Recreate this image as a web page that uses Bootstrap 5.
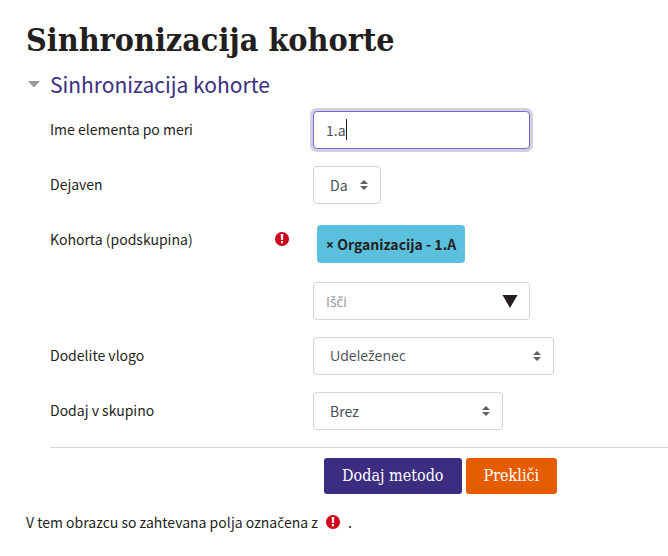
<!DOCTYPE html>
<html lang="sl">
<head>
<meta charset="utf-8">
<meta name="viewport" content="width=device-width, initial-scale=1">
<title>Sinhronizacija kohorte</title>
<link href="https://cdn.jsdelivr.net/npm/bootstrap@5.3.0/dist/css/bootstrap.min.css" rel="stylesheet">
<style>
  body, .form-control, .form-select { font-family: "Noto Sans CJK SC", "Noto Sans", sans-serif; font-size: 14px; line-height: 24px; }
  body { color: #231f20; background: #fff; overflow-x: hidden; }
  .page { padding: 17px 0 16px 26px; }
  .page-title, .btn { font-family: "DejaVu Serif Condensed", "DejaVu Serif", serif; }
  .page-title { font-size: 32px; line-height: 46px; font-weight: 700; }
  .section-heading { margin: 7px 0 13px; }
  .section-toggle { color: #3c2d80; font-size: 21px; line-height: 28px; gap: 9px; }
  .section-body { padding-left: 24px; }
  .field { display: grid; grid-template-columns: 263px 1fr; margin-bottom: 17px; }
  .field-label { padding: 6px 24px 8px 0; }
  .form-control, .form-select { height: 38px; padding: 6px 12px; color: #495057; border-color: #ced4da; border-radius: 4px; }
  .form-control { width: 217px; }
  .form-control::placeholder { color: #8f959e; }
  .accented, .form-control.accented, .form-select.accented { font-family: "Open Sans", "Noto Sans", sans-serif; }
  span.accented { line-height: 1; }
  .name-input, .name-input:focus { border-color: #7c6bcc; box-shadow: 0 0 0 3px #d3cfe3; background: linear-gradient(#231f20, #231f20) 32px 7px / 1px 21px no-repeat #fff; }
  .form-select { padding: 6px 28px 6px 16px; background-size: 8px 10px; background-position: right 12px center;
    background-image: url("data:image/svg+xml,%3Csvg xmlns='http://www.w3.org/2000/svg' viewBox='0 0 8 10'%3E%3Cpath fill='%23606060' d='M4 0 8 4H0zM0 6h8L4 10z'/%3E%3C/svg%3E"); }
  .select-short { width: 68px; }
  .select-role { width: 241px; }
  .select-group { width: 190px; }
  .cohort-tag { background: #5bc0de; color: #231f20; padding: 7px 9px; margin: 4px 4px 19px; border: 0; border-radius: 4px; line-height: 24px; font-weight: 700; }
  .search-arrow { right: 12px; top: 13px; }
  .form-actions { border-top: 1px solid #d9d9d9; padding: 10px 0 0 274px; gap: 4px; }
  .form-actions .btn { color: #fff; border: 0; border-radius: 3px; font-size: 16px; line-height: 24px; padding: 6px 18px; }
  .btn-submit { background: #3c2d80; }
  .btn-cancel { background: #e65c00; }
</style>
</head>
<body>
<main class="page">
  <h1 class="page-title m-0">Sinhronizacija kohorte</h1>
  <form>
    <h2 class="section-heading"><a class="section-toggle d-flex align-items-center text-decoration-none fw-normal" href="#method">
      <svg width="15" height="7" viewBox="0 0 15 7" aria-hidden="true"><path fill="#999" d="M2 0h12L8.600 6H7.400z"/></svg>Sinhronizacija kohorte</a></h2>
    <div class="section-body" id="method">
      <div class="field">
        <label class="field-label" for="name">Ime elementa po meri</label>
        <div><input class="form-control name-input" id="name" type="text" value="1.a"></div>
      </div>
      <div class="field">
        <label class="field-label" for="active">Dejaven</label>
        <div><select class="form-select select-short" id="active"><option>Da</option></select></div>
      </div>
      <div class="field">
        <div class="field-label d-flex justify-content-between align-items-start"><label for="cohort">Kohorta (podskupina)</label>
          <svg class="mt-1" width="14" height="16" viewBox="0 0 14 16" role="img" aria-label="Zahtevano"><circle cx="7" cy="8" r="7" fill="#d0021b"/><path fill="#fff" d="M5.700 3h2.600L8 9H6zM6 10h2v2.300H6z"/></svg></div>
        <div>
          <button class="cohort-tag d-block" type="button"><span class="accented">×</span> Organizacija - 1.A</button>
          <div class="position-relative d-inline-block align-top">
            <input class="form-control accented" id="cohort" type="text" placeholder="Išči">
            <svg class="search-arrow position-absolute" width="16" height="13" viewBox="0 0 16 13" aria-hidden="true"><path fill="#231f20" d="M.500 0h15L8 13z"/></svg>
          </div>
        </div>
      </div>
      <div class="field">
        <label class="field-label" for="role">Dodelite vlogo</label>
        <div><select class="form-select select-role accented" id="role"><option>Udeleženec</option></select></div>
      </div>
      <div class="field">
        <label class="field-label" for="group">Dodaj v skupino</label>
        <div><select class="form-select select-group" id="group"><option>Brez</option></select></div>
      </div>
      <div class="form-actions d-flex">
        <button class="btn btn-submit" type="submit">Dodaj metodo</button>
        <button class="btn btn-cancel" type="button">Prekliči</button>
      </div>
    </div>
    <p class="m-0 mt-3 d-flex align-items-center"><span>V tem obrazcu so zahtevana polja ozna<span class="accented">č</span>ena z</span>
      <svg class="mx-2" width="14" height="16" viewBox="0 0 14 16" role="img" aria-label="Zahtevano"><circle cx="7" cy="8" r="7" fill="#d0021b"/><path fill="#fff" d="M5.700 3h2.600L8 9H6zM6 10h2v2.300H6z"/></svg>.</p>
  </form>
</main>
<script src="https://cdn.jsdelivr.net/npm/bootstrap@5.3.0/dist/js/bootstrap.bundle.min.js"></script>
</body>
</html>
